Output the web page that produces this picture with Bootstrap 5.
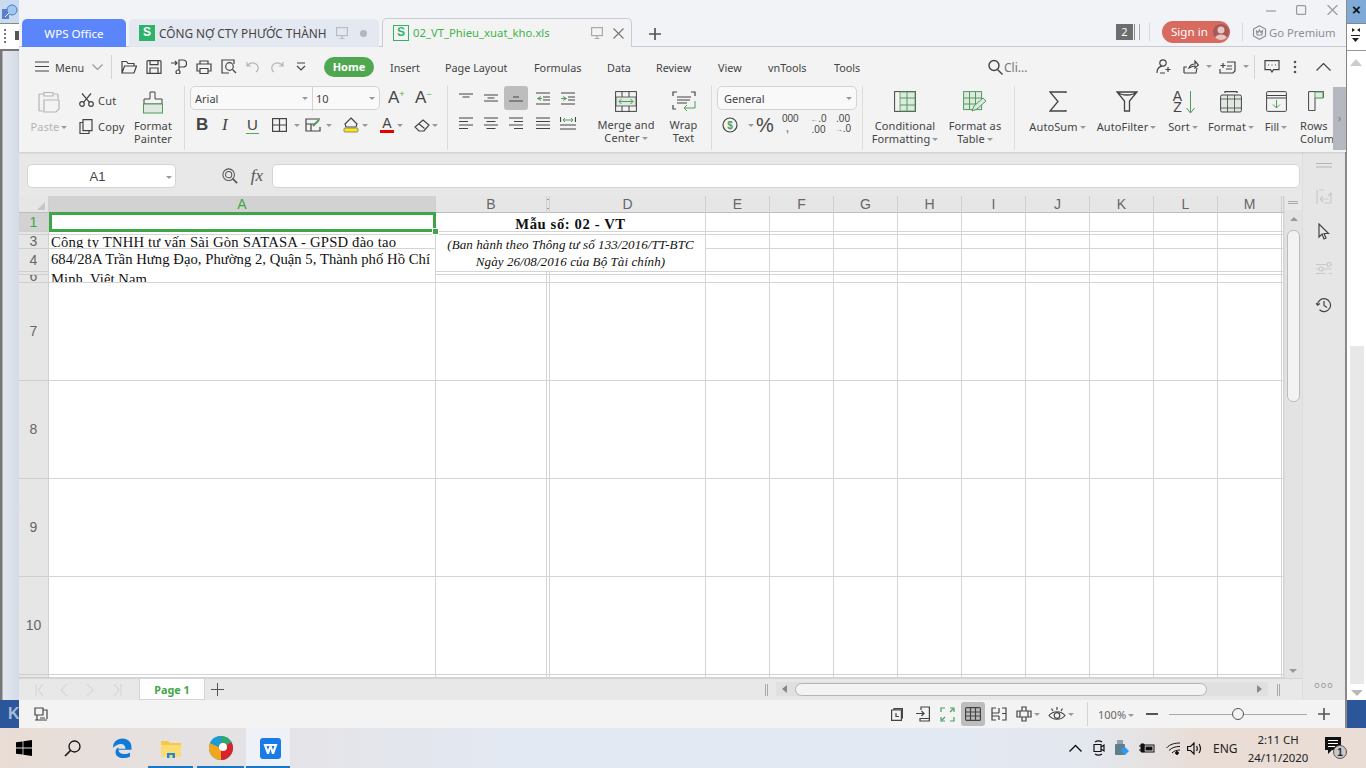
<!DOCTYPE html>
<html lang="vi">
<head>
<meta charset="utf-8">
<title>WPS Spreadsheets</title>
<link href="https://cdn.jsdelivr.net/npm/bootstrap@5.3.0/dist/css/bootstrap.min.css" rel="stylesheet">
<style>
html,body{margin:0;width:1366px;height:768px;overflow:hidden;background:#fff}
body{font-family:"Noto Sans","Liberation Sans",sans-serif;font-size:11px;color:#444;line-height:13px}
svg{display:block;flex:none}
.ln{fill:none;stroke:currentColor;stroke-width:1.2}
.fx0{flex:none}
.desk{height:728px}
.lstrip{width:19px;background:linear-gradient(90deg,#777 0,#777 2px,#e3e8ef 3px,#d4dbe6 100%)}
.ls-top{height:23px;background:#c9dcef;padding:4px 0 0 2px}
.ls-bar{height:28px;background:#fff;border-top:1px solid #888;border-bottom:2px solid #777;padding:4px 0 0 4px}
.ls-band,.rs-band{height:28px;background:#2b579a;color:#a9bcd9;font:bold 16px/28px "Liberation Sans",sans-serif;padding-left:8px;overflow:hidden}
.rstrip{width:20px;background:#fff;border-left:1px solid #8a8a8a}
.rs-top{height:23px;background:#7fa9d6;color:#111;font:bold 15px/20px "Liberation Sans",sans-serif;text-align:center}
.rs-bar{height:28px;border-top:1px solid #888;border-bottom:1px solid #999;padding:3px 0 0 4px;color:#222}
.rs-sc{width:14px;margin-left:3px}
.rs-thumb{background:#e8e8e8;height:338px}
.rs-ar{width:0;height:0;border:6px solid transparent;border-top:6px solid #b9b9b9;border-bottom:0;margin:6px 0 4px 1px}
.wps{width:1327px;background:#f2f3f7}
.ttl{height:47px;border-bottom:1px solid #c9cbd9}
.tabs{padding-left:3px;gap:3px;height:47px}
.tb{height:28px;border-radius:5px 5px 0 0;font-size:11.8px;line-height:30px;white-space:nowrap}
.tb-home{width:104px;background:#5b86fb;color:#fff;text-align:center;font-size:11.6px}
.tb-a{width:250px;background:#e4e8f1;color:#444;padding-left:10px;gap:4px}
.tb-b{width:250px;height:29px;background:#f3f3f3;border:1px solid #c9cbd9;border-bottom:0;color:#3fb34a;padding-left:10px;gap:4px;font-size:11.3px}
.sicon{flex:none;width:16px;height:16px;font:bold 12px/15px "Liberation Sans",sans-serif;text-align:center}
.sicon-f{background:#2fb36a;color:#fff}
.sicon-o{border:1px solid #2fb36a;color:#2fb36a;line-height:13px}
.mon{color:#b9bcc4;margin-left:6px}
.mon2{color:#aaa;margin-left:37px}
.xcl{color:#777;margin-left:6px}
.tdot{width:7px;height:7px;border-radius:50%;background:#b3b6bd;margin-left:8px}
.plus{margin-left:14px;color:#555;margin-bottom:7px}
.acct{width:230px;margin-left:auto}
.wctl{height:21px;padding-top:5px;color:#999}
.wc-g{display:grid;grid-template-columns:150px 30px 31px auto}
.acc-g{display:grid;grid-template-columns:17px 16px 13px 80px 10px 17px auto;align-items:center;height:22px}
.num2{background:#6d6d6d;color:#fff;font-size:11px;line-height:16px;text-align:center;height:16px}
.bars{width:6px;height:16px;margin-left:1px;border-left:1px solid #888;border-right:1px solid #aaa}
.vsep{width:1px;height:18px;background:#d7d9df}
.signin{width:68px;height:22px;background:#d96a5f;color:#fff;font-size:11.6px;line-height:22px;padding:0 0 0 9px;gap:5px;border:0;justify-content:flex-start}
.ava{width:16px;height:16px;border-radius:50%;background:#a85858;overflow:hidden}
.gop{font-size:11.3px;color:#8a8f99;white-space:nowrap}
.hexi{color:#8a8f99}
.rib{background:#f3f3f3;box-shadow:0 1px 2px rgba(0,0,0,.12);position:relative;height:105px}
.mrow{display:grid;grid-template-columns:20px 37px 19px 10px 25px 25px 25px 25px 25px 24px 26px 28px 66px 55px 89px 73px 49px 62px 50px 66px 154px 16px 152px 27px 21px 15px 22px 13px 10px 29px 23px auto;align-items:center;height:39px;padding-left:16px;white-space:nowrap;font-size:10.8px}
.mrow>span:not(.cr):not(.msep){margin-top:2px}
.msep{width:1px;height:24px;background:#d4d4d4}
.home{width:50px;height:20px;padding:0;background:#4fa850;color:#fff;font-weight:700;font-size:11px;line-height:20px;border:0}
.cr{width:0;height:0;border:3px solid transparent;border-top:3px solid #999;border-bottom:0;display:inline-block;vertical-align:2px;margin-left:2px}
.rrow{height:66px}
.grp{border-right:1px solid #dcdcdc;margin:0;height:64px;flex:none}
.g1{width:166px;display:grid;grid-template-columns:60px 54px 40px}
.g2{width:263px;padding-left:5px}
.g3{width:264px;display:grid;grid-template-columns:136px 72px 43px;padding-left:6px}
.g4{width:151px;padding-left:5px}
.g5{width:152px;display:grid;grid-template-columns:5px 74px 66px}
.g6{width:318px;display:grid;grid-template-columns:10px 65px 73px 40px 56px 34px 40px;border:0;overflow:hidden}
.lb{display:flex;flex-direction:column;align-items:center;text-align:center;white-space:nowrap;letter-spacing:.1px}
.lb-ic{height:33px;padding-top:5px;display:flex;align-items:flex-start;justify-content:center}
.lb-up{margin-top:-1px}
.lb-1{margin-top:1px}
.dim{color:#b5b5b5}
.cc{display:grid;grid-template-columns:19px auto;grid-template-rows:26px 26px;align-items:center;padding-top:1px;letter-spacing:.2px}
.fbx{height:24px;background:#f9f9f9;border:1px solid #d3d3d3;border-radius:5px;line-height:24px}
.fbx-font{width:190px;display:grid;grid-template-columns:121px auto}
.fbx-gen{width:140px;padding-left:6px}
.fcell{padding-left:4px;position:relative}
.fcell+.fcell{border-left:1px solid #d3d3d3;padding-left:3px}
.fcr{position:absolute;right:4px;top:10px}
.g2-a{display:grid;grid-template-columns:198px 27px auto;align-items:center;height:24px}
.aa{font:17px/20px "Liberation Sans",sans-serif;color:#444}
.aa sup{font-size:9px;color:#4fa850;top:-.7em}
.g2-b{display:grid;grid-template-columns:24px 26px 27px 20px 13px 19px 19px 17px 19px 16px 19px 16px auto;align-items:center;height:24px;margin-top:3px;padding-left:5px}
.b-t{font:700 17px/20px "Liberation Sans",sans-serif;color:#444;padding-left:1px}
.i-t{font:italic 17px/20px "Liberation Serif",serif;color:#444;padding-left:3px}
.u-t{font:15px/16px "Liberation Sans",sans-serif;color:#444;border-bottom:1px solid #4fa850;width:13px;text-align:center;margin-left:1px}
.algn{display:grid;grid-template-columns:25px 25px 27px 25px 25px;grid-template-rows:24px 26px;justify-items:start;align-items:center}
.ai{width:24px;height:24px;border-radius:3px;display:flex;align-items:center;justify-content:center}
.ai-on{background:#bdbdbd}
.g4-b{display:grid;grid-template-columns:24px 13px 23px 24px 25px 24px;align-items:center;height:24px;margin-top:3px;padding-left:5px}
.pct{font:20px/20px "Liberation Sans",sans-serif;color:#444;margin-left:-3px}
.tiny{font:10px/10px "Liberation Sans",sans-serif;color:#444;text-align:center;white-space:nowrap;margin-top:-2px}
.tiny-l{text-align:left}
.gn{color:#4f9c5a}
.ga{font-size:8px}
.morebar{position:absolute;right:0;top:40px;width:13px;height:63px;background:#b5b8bf;color:#777;font-size:10px;line-height:63px;text-align:center}
.mid{height:548px}
.lft{width:1283px;background:#e8e8e8}
.side{width:44px;background:#e6e6e6;border-left:1px solid #dedede;border-right:1px solid #888;padding-top:8px;color:#c9c9c9}
.sd-1{margin-top:3px;color:#b5b5b5}
.sd-2{margin-top:21px}
.sd-3{margin-top:18px;color:#444}
.sd-4{margin-top:21px}
.sd-5{margin-top:21px;color:#444}
.dots3{margin-top:353px;color:#999;font-size:9px;letter-spacing:1px;text-align:center;padding-top:12px}
.fbar{height:44px;padding:12px 2px 0 8px}
.nmb{width:149px;height:24px;background:#fff;border:1px solid #d5d5d5;border-radius:5px;text-align:center;font:13px/24px "Liberation Sans",sans-serif;position:relative;color:#444;padding-right:8px}
.nmb .cr{position:absolute;right:3px;top:11px}
.fxz{margin:4px 0 0 46px;color:#555}
.fxt{font:italic 17px/24px "Liberation Serif",serif;color:#555;margin:0 5px 0 9px;width:20px}
.fxi{flex:1;height:24px;background:#fff;border:1px solid #d5d5d5;border-radius:5px}
.work{height:482px}
.xls{width:1265px;table-layout:fixed;border-collapse:separate;border-spacing:0;margin:0;background:#fff;color:#000}
.xls th{background:#e6e6e6;font:400 14px/16px "Liberation Sans",sans-serif;color:#666;text-align:center;padding:0;border:0;border-right:1px solid #d0d0d0;border-bottom:1px solid #bdbdbd;overflow:hidden;position:relative}
.xls td{padding:0;border:0;border-right:1px solid #d4d4d4;border-bottom:1px solid #d4d4d4;background:#fff;box-shadow:none;vertical-align:top;overflow:visible}
.xls .rh{border-right:1px solid #d0d0d0;border-bottom:1px solid #cfcfcf;vertical-align:middle;line-height:14px}
.xls .rb .rh{padding-bottom:2px}
.xls th.sel{background:#d2d2d2;color:#3fa648}
.xls th.blk{background:#e6e6e6}
.corner{width:0;height:0;border-style:solid;border-width:0 0 8px 8px;border-color:transparent transparent #c6c6c6 transparent;margin:6px 0 0 18px}
.r0{height:17px}.r1{height:19px}.r2{height:3px}.r3{height:14px}.r4{height:23px}.r5{height:3px}.r6{height:8px}.rb{height:98px}.re{height:3px}
.c-h{overflow:hidden;height:13px;line-height:12px}
.c-h6{overflow:hidden;height:7px;line-height:2px}
.ctxt{font:14.67px/20px "Liberation Serif",serif;color:#111;padding-left:2px;white-space:nowrap;overflow:hidden}
.c-a3{height:13px;line-height:15px;letter-spacing:.19px}
.c-a4{height:33px;line-height:20px;letter-spacing:.04px}
.c-tit{font:700 14.67px/23px "Liberation Serif",serif;text-align:center;color:#111;height:18px;overflow:hidden;letter-spacing:.6px}
.c-it{font:italic 13px/17px "Liberation Serif",serif;text-align:center;color:#111;white-space:nowrap;padding-top:1px;letter-spacing:.08px}
.rel{position:relative}
.selbox{position:absolute;left:0;top:-1px;right:-1px;bottom:-1px;border:3px solid #3fa648;pointer-events:none}
.selh{position:absolute;right:-6px;bottom:-6px;width:5px;height:5px;background:#3fa648;border:1px solid #fff;box-sizing:content-box;z-index:2}
.cbr{position:absolute;left:-1px;top:3px;width:5px;height:10px;border:1px solid #999;background:#e6e6e6}
.vsb{width:18px;margin-left:0;background:#e8e8e8;border-left:1px solid #dcdcdc}
.vsb-top{height:14px;padding:5px 0 0 3px}
.sp2{width:10px;height:3px;border-top:1px solid #aaa;border-bottom:1px solid #aaa}
.vtrack{height:468px;background:#e3e3e3;position:relative}
.up,.dn{width:0;height:0;border:4px solid transparent}
.up{border-bottom:4px solid #999;border-top:0;margin:0 auto;position:relative;top:7px}
.dn{border-top:4px solid #999;border-bottom:0;position:absolute;left:4px;bottom:5px}
.vth{position:absolute;top:20px;left:2px;width:13px;height:172px;background:#f3f3f3;border:1px solid #bcbcbc;border-radius:6px}
.sbar{height:22px;background:#e8e8e8;border-top:1px solid #d4d4d4}
.nav-ar{width:120px;color:#d8d8d8;display:grid;grid-template-columns:25px 26px 26px auto;padding:5px 0 0 16px;box-sizing:border-box}
.pg{width:66px;height:21px;background:#fff;border:1px solid #d4d4d4;border-top:0;color:#3fa648;font-weight:700;font-size:10.8px;line-height:21px;text-align:center;margin-left:0}
.adds{margin-left:6px;color:#555;margin-top:4px}
.spl{width:3px;height:12px;border-left:1px solid #aaa;border-right:1px solid #aaa;margin:5px 0 0 541px}
.hsb{width:492px;height:14px;margin:3px 0 0 8px;background:#e0e0e0;position:relative;display:flex;align-items:center}
.la,.ra{width:0;height:0;border:4px solid transparent}
.la{border-right:5px solid #888;border-left:0;margin-left:6px}
.ra{border-left:5px solid #888;border-right:0;position:absolute;right:6px;top:3px}
.hth{width:412px;height:13px;margin-left:8px;background:#f3f3f3;border:1px solid #b5b5b5;border-radius:7px}
.spl2{width:3px;height:12px;border-left:1px solid #aaa;border-right:1px solid #aaa;margin:5px 0 0 9px}
.stat{height:28px;background:#f3f3f3;display:grid;grid-template-columns:857px 25px 24px 25px 26px 25px 32px 39px 11px 48px 23px 149px auto;align-items:center;padding-left:15px;border-right:1px solid #888}
.act{width:24px;height:24px;background:#bdbdbd;border-radius:3px;display:flex;align-items:center;justify-content:center;margin-left:-4px}
.zp{color:#666;white-space:nowrap;font-size:11px}
.slider{width:138px;height:1px;background:#aaa;position:relative}
.knob{position:absolute;left:63px;top:-6px;width:12px;height:12px;border-radius:50%;background:#f3f3f3;border:1px solid #555}
.bar{height:40px;background:linear-gradient(90deg,#e9ddd5 0,#e5e1e2 14%,#e3e9f3 38%,#e3e9f3 68%,#e3e7ee 80%,#e9ddd5 88%,#e9ddd5 100%);display:grid;grid-template-columns:48px 49px 49px 49px 51px 44px 779px 24px 22px 24px 27px 21px 26px 19px 93px auto;align-items:center;position:relative}
.tk{height:40px;display:flex;align-items:center;justify-content:center;position:relative}
.tk-run::after{content:"";position:absolute;left:2px;right:2px;bottom:0;height:2px;background:#1a78c8}
.tk-on{background:#eef2f8;width:44px;padding-left:4px}
.tk-on::after{left:0;right:0}
.clock{font:11.4px/18px "Noto Sans",sans-serif;color:#222;text-align:center;white-space:nowrap;width:76px;margin:1px 0 0 8px}
.eng{font-size:12px;color:#222;white-space:nowrap}
.dk{color:#111}
</style>
</head>
<body>
<div class="d-flex flex-column">
<div class="desk d-flex">

  <div class="lstrip d-flex flex-column fx0">
    <div class="ls-top"><svg width="17" height="16" viewBox="0 0 17 16"><rect x="0" y="5" width="7" height="10" fill="#5a7fd0"/><circle cx="10" cy="6" r="5" fill="#9fc9ef" stroke="#4e78c4"/><path d="M3 13l4-4" stroke="#fff"/></svg></div>
    <div class="ls-bar d-flex gap-2"><svg width="3" height="18" viewBox="0 0 3 18"><path d="M1 1v16" stroke="#777" stroke-width="2" stroke-dasharray="2 2"/></svg><svg width="8" height="16" viewBox="0 0 8 16"><rect y="3" width="8" height="9" fill="#555"/></svg></div>
    <div class="flex-grow-1"></div>
    <div class="ls-band">K</div>
  </div>

  <div class="wps d-flex flex-column">
    <div class="ttl d-flex">
      <div class="tabs d-flex align-items-end">
        <div class="tb tb-home">WPS Office</div>
        <div class="tb tb-a d-flex align-items-center"><span class="sicon sicon-f">S</span><span>CÔNG NỢ CTY PHƯỚC THÀNH</span>
          <svg class="mon ln" width="12" height="12" viewBox="0 0 12 12"><rect x=".6" y=".6" width="10.8" height="8"/><path d="M6 9v2.5M3.5 11.5h5"/></svg><span class="tdot"></span></div>
        <div class="tb tb-b d-flex align-items-center"><span class="sicon sicon-o">S</span><span>02_VT_Phieu_xuat_kho.xls</span>
          <svg class="ln mon2" width="12" height="12" viewBox="0 0 12 12"><rect x=".6" y=".6" width="10.8" height="8"/><path d="M6 9v2.5M3.5 11.5h5"/></svg>
          <svg class="ln xcl" width="11" height="11" viewBox="0 0 11 11"><path d="M.5.5l10 10M10.500.5l-10 10"/></svg></div>
        <svg class="plus" width="12" height="12" viewBox="0 0 12 12"><path d="M6 0v12M0 6h12" stroke="currentColor" stroke-width="1.7"/></svg>
      </div>
      <div class="acct">
        <div class="wctl wc-g">
          <span></span>
          <svg class="ln" width="11" height="10" viewBox="0 0 11 10"><path d="M0 6h10"/></svg>
          <svg class="ln" width="11" height="10" viewBox="0 0 11 10"><rect x=".6" y=".6" width="9" height="8.800" rx="1"/></svg>
          <svg class="ln" width="11" height="10" viewBox="0 0 11 10"><path d="M.5 0l10 10M10.500 0l-10 10"/></svg>
        </div>
        <div class="acc-g">
          <div class="num2">2</div><div class="bars"></div>
          <div class="vsep"></div>
          <button class="btn rounded-pill signin d-flex align-items-center" type="button">Sign in<span class="ava"><svg width="16" height="16" viewBox="0 0 16 16"><circle cx="8" cy="6" r="3.500" fill="#e7c5c2"/><ellipse cx="8" cy="14.500" rx="6" ry="4" fill="#e7c5c2"/></svg></span></button>
          <div class="vsep"></div>
          <svg class="hexi ln" width="15" height="15" viewBox="0 0 15 15"><path d="M7.500 .7l6 3.400v6.800l-6 3.400-6-3.400V4.100z"/><path d="M4.500 6l1.700 1.300L7.500 5l1.300 2.300L10.500 6l-.6 4H5.100z"/></svg>
          <span class="gop">Go Premium</span>
        </div>
      </div>
    </div>

    <div class="rib">
      <div class="mrow">
        <svg class="ln" width="14" height="11" viewBox="0 0 14 11"><path d="M0 1h14M0 5.500h14M0 10h14"/></svg>
        <span>Menu</span>
        <svg class="ln" width="11" height="6" viewBox="0 0 11 6" style="color:#999"><path d="M.5.5l5 5 5-5"/></svg>
        <span class="msep"></span>
        <svg class="ln" width="16" height="14" viewBox="0 0 16 14"><path d="M1 13V1.500h4.500l1.500 2h6V6M1 13l2.500-7h12L13 13z"/></svg>
        <svg class="ln" width="16" height="14" viewBox="0 0 16 14"><path d="M2 .6h12a1 1 0 0 1 1 1v11.800H1V1.600a1 1 0 0 1 1-1zM4 .6v4h8v-4M4 13.400V8h8v5.400"/></svg>
        <svg class="ln" width="16" height="15" viewBox="0 0 16 15"><path d="M0 4h6M4 2l2 2-2 2M8 1h4a3 3 0 0 1 0 7H8zM8 8v3M5 13a2 2 0 1 0 4 0 2 2 0 1 0-4 0"/></svg>
        <svg class="ln" width="16" height="14" viewBox="0 0 16 14"><path d="M4 4V1h8v3M4 11H1V4h14v7h-3M4 8.500h8v5H4z"/></svg>
        <svg class="ln" width="16" height="15" viewBox="0 0 16 15"><path d="M13 5V1H1v13h7"/><circle cx="8.500" cy="7.500" r="3.800"/><path d="M11.500 10.500l3.500 3.500"/></svg>
        <svg class="ln dim" width="14" height="12" viewBox="0 0 14 12"><path d="M1 1v4h4M1 5c2-3 6-4 9-2 3 2 3 6 0 8"/></svg>
        <svg class="ln dim" width="14" height="12" viewBox="0 0 14 12"><path d="M13 1v4H9M13 5c-2-3-6-4-9-2-3 2-3 6 0 8"/></svg>
        <svg class="ln" width="10" height="10" viewBox="0 0 10 10"><path d="M1 1h8M1 4l4 4 4-4"/></svg>
        <button class="btn rounded-pill home" type="button">Home</button>
        <span>Insert</span><span>Page Layout</span><span>Formulas</span><span>Data</span><span>Review</span><span>View</span><span>vnTools</span><span>Tools</span>
        <svg class="ln" width="15" height="16" viewBox="0 0 15 16" style="stroke-width:1.4"><circle cx="6" cy="6.500" r="5"/><path d="M9.500 10.500L14.500 15.500"/></svg>
        <span style="color:#777;font-size:12px">Cli...</span>
        <svg class="ln" width="16" height="15" viewBox="0 0 16 15"><circle cx="7" cy="4" r="3.200"/><path d="M1 14c0-5 3-6.500 5-6.800M4 14h5M12 8v5M9.500 10.500h5"/></svg>
        <svg class="ln" width="16" height="14" viewBox="0 0 16 14"><path d="M1 13V7h3M1 13h12l1-5M6 8c1-3 3-4 6-4V1l3.500 4L12 8V6c-2 0-4 1-6 2z"/></svg>
        <span class="cr"></span>
        <svg class="ln" width="17" height="14" viewBox="0 0 17 14"><path d="M4 3v5M1.500 5.500h5M8 2h8v9l-2 2H1V9M8 6h5M7 9h6"/></svg>
        <span class="cr"></span>
        <span class="msep"></span>
        <svg class="ln" width="16" height="13" viewBox="0 0 16 13"><path d="M1 .6h14v9H9.500L8 12 6.500 9.600H1z"/><path d="M4 5h1M7.500 5h1M11 5h1"/></svg>
        <svg width="4" height="14" viewBox="0 0 4 14"><circle cx="2" cy="2" r="1.300" fill="#555"/><circle cx="2" cy="7" r="1.300" fill="#555"/><circle cx="2" cy="12" r="1.300" fill="#555"/></svg>
        <svg class="ln" width="15" height="8" viewBox="0 0 15 8"><path d="M.5 7.500l7-7 7 7"/></svg>
      </div>

      <div class="rrow d-flex">
        <div class="grp g1">
          <div class="lb dim"><div class="lb-ic"><svg class="ln" width="22" height="24" viewBox="0 0 22 24"><path d="M6 3H2a1 1 0 0 0-1 1v15a1 1 0 0 0 1 1h3M16 3h3a1 1 0 0 1 1 1v4M6 1.500h9V5H6zM6 9h15v9l-3 3H6z"/></svg></div><span class="lb-1">Paste<span class="cr"></span></span></div>
          <div class="cc">
            <svg class="ln" width="15" height="14" viewBox="0 0 15 14"><circle cx="3" cy="11" r="2.300"/><circle cx="12" cy="11" r="2.300"/><path d="M4.500 9.300L12 .5M10.500 9.300L3 .5"/></svg><span>Cut</span>
            <svg class="ln" width="14" height="15" viewBox="0 0 14 15"><path d="M4 .6h9v11H4zM4 3.500H1v11h9v-3"/></svg><span>Copy</span>
          </div>
          <div class="lb"><div class="lb-ic"><svg width="20" height="24" viewBox="0 0 20 24"><path d="M7 1h5v7h7v5H1V8h6z" fill="none" stroke="#444"/><rect x=".5" y="13" width="19" height="9" fill="#dfe9e2" stroke="#4f9c5a"/></svg></div><span>Format<br>Painter</span></div>
        </div>

        <div class="grp g2">
          <div class="g2-a">
            <div class="fbx fbx-font"><div class="fcell">Arial<span class="cr fcr"></span></div><div class="fcell">10<span class="cr fcr"></span></div></div>
            <span class="aa">A<sup>+</sup></span><span class="aa">A<sup>−</sup></span>
          </div>
          <div class="g2-b">
            <span class="b-t">B</span><span class="i-t">I</span><span class="u-t">U</span>
            <svg class="ln" width="15" height="14" viewBox="0 0 15 14"><rect x=".6" y=".6" width="13.800" height="12.800"/><path d="M7.500 0v14M0 7h15"/></svg><span class="cr"></span>
            <svg class="ln" width="16" height="14" viewBox="0 0 16 14"><path d="M15 1H1v12h14V9M1 6h9M6 6v7"/><path d="M8 8l6-6" stroke="#4f9c5a" stroke-width="2"/></svg><span class="cr"></span>
            <svg width="16" height="16" viewBox="0 0 16 16"><path class="ln" d="M8 1l6 6-1 3H3L2 7z"/><rect x="1" y="11" width="14" height="4" rx="1" fill="#ffe900" stroke="#888"/></svg><span class="cr"></span>
            <span class="d-flex flex-column align-items-center"><span style="font:14px/13px 'Liberation Sans',sans-serif">A</span><svg width="14" height="3" viewBox="0 0 14 3"><rect width="14" height="3" fill="#e60000"/></svg></span><span class="cr"></span>
            <svg class="ln" width="16" height="13" viewBox="0 0 16 13"><path d="M9 1l6 5-5 6H5L1 8zM4.500 4.500l6 5"/></svg><span class="cr"></span>
          </div>
        </div>

        <div class="grp g3">
          <div class="algn">
            <div class="ai"><svg class="ln" width="14" height="10" viewBox="0 0 14 10"><path d="M0 1h14M3.500 4h7"/></svg></div>
            <div class="ai"><svg class="ln" width="14" height="8" viewBox="0 0 14 8"><path d="M0 1h14M3.500 4h7M0 7h14"/></svg></div>
            <div class="ai ai-on"><svg class="ln" width="14" height="8" viewBox="0 0 14 8"><path d="M4 3h6M0 7h14"/></svg></div>
            <div class="ai"><svg width="14" height="13" viewBox="0 0 14 13"><path class="ln" d="M0 1h14M7 5h7M7 8h7M0 12h14"/><path d="M5 4.500L1.500 6.500 5 8.500M1.500 6.500H6" fill="none" stroke="#4f9c5a"/></svg></div>
            <div class="ai"><svg width="14" height="13" viewBox="0 0 14 13"><path class="ln" d="M0 1h14M7 5h7M7 8h7M0 12h14"/><path d="M2 4.500L5.500 6.500 2 8.500M5.500 6.500H0" fill="none" stroke="#4f9c5a"/></svg></div>
            <div class="ai"><svg class="ln" width="14" height="12" viewBox="0 0 14 12"><path d="M0 1h14M0 4.500h9M0 8h14M0 11.500h9"/></svg></div>
            <div class="ai"><svg class="ln" width="14" height="12" viewBox="0 0 14 12"><path d="M0 1h14M2.500 4.500h9M0 8h14M2.500 11.500h9"/></svg></div>
            <div class="ai"><svg class="ln" width="14" height="12" viewBox="0 0 14 12"><path d="M0 1h14M5 4.500h9M0 8h14M5 11.500h9"/></svg></div>
            <div class="ai"><svg class="ln" width="14" height="12" viewBox="0 0 14 12"><path d="M0 1h14M0 4.500h14M0 8h14M0 11.500h14"/></svg></div>
            <div class="ai"><svg width="16" height="13" viewBox="0 0 16 13"><path class="ln" d="M0 8h16M0 12h16M.5 0v5M15.500 0v5"/><path d="M3 3h10M5 1L3 3l2 2M11 1l2 2-2 2" fill="none" stroke="#4f9c5a"/></svg></div>
          </div>
          <div class="lb"><div class="lb-ic"><svg width="22" height="21" viewBox="0 0 22 21"><rect x=".6" y=".6" width="20.800" height="19.800" fill="none" stroke="#444"/><rect x="1" y="6" width="20" height="9" fill="#dfe9e2" stroke="#444" stroke-width=".8"/><path d="M7 0v6M14 0v6M7 15v6M14 15v6" stroke="#444" fill="none"/><path d="M4 10.500h14M6.500 8L4 10.500 6.500 13M15.500 8L18 10.500 15.500 13" fill="none" stroke="#4f9c5a"/></svg></div><span class="lb-up">Merge and<br>Center<span class="cr"></span></span></div>
          <div class="lb"><div class="lb-ic"><svg width="24" height="21" viewBox="0 0 24 21"><path class="ln" d="M1 5V1h4M19 1h4v4M1 14v4h3M5 6h14M5 9h13M5 12h10"/><path d="M23 10v7h-11M15 14l-3 3 3 3" fill="none" stroke="#4f9c5a"/></svg></div><span class="lb-up">Wrap<br>Text</span></div>
        </div>

        <div class="grp g4">
          <div class="fbx fbx-gen position-relative">General<span class="cr fcr"></span></div>
          <div class="g4-b">
            <svg width="16" height="16" viewBox="0 0 16 16"><circle class="ln" cx="8" cy="8" r="7"/><text x="8" y="11.500" text-anchor="middle" font-family="Liberation Sans" font-size="10" font-weight="700" fill="#4f9c5a">$</text></svg><span class="cr"></span>
            <span class="pct">%</span>
            <div class="tiny tiny-l"><div>000</div><div class="gn ps-1" style="font-weight:700">,</div></div>
            <div class="tiny"><div><span class="gn ga">←</span>.0</div><div>.00</div></div>
            <div class="tiny"><div>.00</div><div><span class="gn ga">→</span>.0</div></div>
          </div>
        </div>

        <div class="grp g5">
          <span></span>
          <div class="lb"><div class="lb-ic"><svg width="22" height="21" viewBox="0 0 22 21"><rect x=".6" y=".6" width="20.800" height="19.800" fill="none" stroke="#444"/><rect x="6" y="1" width="15" height="19" fill="#dfe9e2" stroke="#4f9c5a" stroke-width=".8"/><path d="M6 7h15M6 14h15M13 1v19" stroke="#4f9c5a" fill="none"/></svg></div><span>Conditional<br>Formatting<span class="cr"></span></span></div>
          <div class="lb"><div class="lb-ic"><svg width="24" height="22" viewBox="0 0 24 22"><rect x=".6" y=".6" width="18" height="18" fill="#dfe9e2" stroke="#4f9c5a"/><path d="M6.500 1v18M12.500 1v18M1 7h18M1 13h18" stroke="#4f9c5a" fill="none"/><path d="M9 20l2-5 9-8 3 3-9 8z" fill="#dfe9e2" stroke="#4f9c5a"/></svg></div><span>Format as<br>Table<span class="cr"></span></span></div>
        </div>

        <div class="grp g6">
          <span></span>
          <div class="lb"><div class="lb-ic"><svg class="ln" width="18" height="21" viewBox="0 0 18 21" style="stroke-width:1.300"><path d="M17 2V1H1l8 9.500L1 20h16v-1"/></svg></div><span class="lb-1">AutoSum<span class="cr"></span></span></div>
          <div class="lb"><div class="lb-ic"><svg class="ln" width="22" height="21" viewBox="0 0 22 21" style="stroke-width:1.300"><path d="M1 1h20l-7.500 9v10h-5V10zM1 1c5 4 15 4 20 0"/></svg></div><span class="lb-1">AutoFilter<span class="cr"></span></span></div>
          <div class="lb"><div class="lb-ic"><span class="d-flex"><span style="font:14px/11px 'Liberation Sans',sans-serif;text-align:center;width:13px">A<br>Z</span><svg width="9" height="23" viewBox="0 0 9 23" style="margin-left:2px"><path d="M4.500 0v22M.5 17l4 5 4-5" fill="none" stroke="#4f9c5a"/></svg></span></div><span class="lb-1">Sort<span class="cr"></span></span></div>
          <div class="lb"><div class="lb-ic"><svg width="22" height="22" viewBox="0 0 22 22"><path class="ln" d="M5 .6h12M5 0v2M17 0v2"/><rect x=".6" y="4" width="20.800" height="17" rx="1.500" fill="#dfe9e2" stroke="#444"/><path d="M1 8h20M1 17h20M7.500 4v17M14.500 4v17" stroke="#444" fill="none" stroke-width=".8"/></svg></div><span class="lb-1">Format<span class="cr"></span></span></div>
          <div class="lb"><div class="lb-ic"><svg width="21" height="21" viewBox="0 0 21 21"><rect x=".6" y=".6" width="19.800" height="19.800" rx="1" fill="none" stroke="#444"/><path class="ln" d="M1 4.500h19M1 7h19"/><path d="M10.500 9v8M7 13.500l3.500 3.500 3.500-3.500" fill="none" stroke="#4f9c5a"/></svg></div><span class="lb-1">Fill<span class="cr"></span></span></div>
          <div class="lb align-items-start" style="padding-left:7px"><div class="lb-ic" style="padding-left:8px"><svg width="16" height="20" viewBox="0 0 16 20"><path d="M.6.6h15v6H7v13H.6z" fill="none" stroke="#444"/><path d="M7 1v6h8V1z" fill="#dfe9e2" stroke="#4f9c5a"/></svg></div><span style="text-align:left">Rows<br>Columns</span></div>
        </div>
      </div>
      <div class="morebar">›</div>
    </div>

    <div class="mid d-flex">
      <div class="lft d-flex flex-column">
        <div class="fbar d-flex">
          <div class="nmb">A1<span class="cr"></span></div>
          <svg class="fxz ln" width="16" height="16" viewBox="0 0 18 18"><circle cx="7.500" cy="7.500" r="6.500"/><circle cx="7.500" cy="7.500" r="3.500"/><path d="M12 12l5 5" stroke-width="1.800"/></svg>
          <div class="fxt text-center">fx</div>
          <div class="fxi"></div>
        </div>
        <div class="work d-flex">
          <table class="table xls">
            <colgroup><col style="width:30px"><col style="width:387px"><col style="width:111px"><col style="width:3px"><col style="width:156px"><col style="width:64px"><col style="width:64px"><col style="width:64px"><col style="width:64px"><col style="width:64px"><col style="width:64px"><col style="width:64px"><col style="width:64px"><col style="width:64px"><col style="width:2px"></colgroup>
            <tbody>
            <tr class="r0"><th class="blk"><div class="corner"></div></th><th class="sel">A</th><th>B</th><th><span class="cbr"></span></th><th>D</th><th>E</th><th>F</th><th>G</th><th>H</th><th>I</th><th>J</th><th>K</th><th>L</th><th>M</th><th class="blk"></th></tr>
            <tr class="r1"><th class="sel rh">1</th><td class="rel"><div class="selbox"><span class="selh"></span></div></td><td colspan="3"><div class="c-tit">Mẫu số: 02 - VT</div></td><td></td><td></td><td></td><td></td><td></td><td></td><td></td><td></td><td></td><td></td></tr>
            <tr class="r2"><th class="rh"></th><td></td><td colspan="3"></td><td></td><td></td><td></td><td></td><td></td><td></td><td></td><td></td><td></td><td></td></tr>
            <tr class="r3"><th class="rh"><div class="c-h">3</div></th><td><div class="ctxt c-a3">Công ty TNHH tư vấn Sài Gòn SATASA - GPSD đào tạo</div></td><td colspan="3" rowspan="2"><div class="c-it">(Ban hành theo Thông tư số 133/2016/TT-BTC<br>Ngày 26/08/2016 của Bộ Tài chính)</div></td><td></td><td></td><td></td><td></td><td></td><td></td><td></td><td></td><td></td><td></td></tr>
            <tr class="r4"><th class="rh"><div class="c-h">4</div></th><td rowspan="3"><div class="ctxt c-a4">684/28A Trần Hưng Đạo, Phường 2, Quận 5, Thành phố Hồ Chí<br>Minh, Việt Nam</div></td><td></td><td></td><td></td><td></td><td></td><td></td><td></td><td></td><td></td><td></td></tr>
            <tr class="r5"><th class="rh"></th><td></td><td></td><td></td><td></td><td></td><td></td><td></td><td></td><td></td><td></td><td></td><td></td><td></td></tr>
            <tr class="r6"><th class="rh"><div class="c-h6">6</div></th><td></td><td></td><td></td><td></td><td></td><td></td><td></td><td></td><td></td><td></td><td></td><td></td><td></td></tr>
            <tr class="rb"><th class="rh">7</th><td></td><td></td><td></td><td></td><td></td><td></td><td></td><td></td><td></td><td></td><td></td><td></td><td></td><td></td></tr>
            <tr class="rb"><th class="rh">8</th><td></td><td></td><td></td><td></td><td></td><td></td><td></td><td></td><td></td><td></td><td></td><td></td><td></td><td></td></tr>
            <tr class="rb"><th class="rh">9</th><td></td><td></td><td></td><td></td><td></td><td></td><td></td><td></td><td></td><td></td><td></td><td></td><td></td><td></td></tr>
            <tr class="rb"><th class="rh">10</th><td></td><td></td><td></td><td></td><td></td><td></td><td></td><td></td><td></td><td></td><td></td><td></td><td></td><td></td></tr>
            <tr class="re"><th class="rh"></th><td></td><td></td><td></td><td></td><td></td><td></td><td></td><td></td><td></td><td></td><td></td><td></td><td></td><td></td></tr>
            </tbody>
          </table>
          <div class="vsb">
            <div class="vsb-top"><div class="sp2"></div></div>
            <div class="vtrack"><div class="up"></div><div class="vth"></div><div class="dn"></div></div>
          </div>
        </div>
        <div class="sbar d-flex">
          <div class="nav-ar">
            <svg class="ln" width="10" height="12" viewBox="0 0 10 12"><path d="M1 0v12M8 0L3 6l5 6"/></svg>
            <svg class="ln" width="8" height="12" viewBox="0 0 8 12"><path d="M7 0L1 6l6 6"/></svg>
            <svg class="ln" width="8" height="12" viewBox="0 0 8 12"><path d="M1 0l6 6-6 6"/></svg>
            <svg class="ln" width="10" height="12" viewBox="0 0 10 12"><path d="M9 0v12M2 0l5 6-5 6"/></svg>
          </div>
          <div class="pg">Page 1</div>
          <svg class="adds" width="13" height="13" viewBox="0 0 13 13"><path d="M6.500 0v13M0 6.500h13" stroke="currentColor"/></svg>
          <div class="spl"></div>
          <div class="hsb"><span class="la"></span><div class="hth"></div><span class="ra"></span></div>
          <div class="spl2"></div>
        </div>
      </div>
      <div class="side d-flex flex-column align-items-center">
        <svg class="ln sd-1" width="16" height="5" viewBox="0 0 16 5"><path d="M0 .5h16M0 4h16"/></svg>
        <svg class="ln sd-2" width="16" height="16" viewBox="0 0 16 16"><path d="M1 1v14M3 1h5M8 14h6a1 1 0 0 0 1-1V5M12 7l3-3 3 3M7 13l-3-3M4 10l3-3M4 10h9"/></svg>
        <svg class="ln sd-3" width="12" height="18" viewBox="0 0 12 18"><path d="M1 1v13l3-3 2 5 2-1-2-4.500h4.500z"/></svg>
        <svg class="ln sd-4" width="16" height="14" viewBox="0 0 16 14"><path d="M0 2.500h11M15 2.500h1M0 7h3M7 7h9M0 11.500h9M13 11.500h3"/><circle cx="13" cy="2.500" r="2"/><circle cx="5" cy="7" r="2"/></svg>
        <svg class="ln sd-5" width="16" height="16" viewBox="0 0 16 16"><path d="M1.500 8a6.500 6.500 0 1 1 2 4.800M0 6l1.500 2.200L4 6.500M8 4v4.500l3 2"/></svg>
        <div class="dots3">ooo</div>
      </div>
    </div>

    <div class="stat">
      <svg class="ln" width="16" height="15" viewBox="0 0 16 15"><path d="M1 1h8v7H1zM9 3h4v2M13 3v9M1 13h12M3 8v5M6 11h5"/></svg>
      <svg class="ln" width="12" height="13" viewBox="0 0 12 13"><path d="M3 2V.6h8.400V10H10M.6 2h9.800v10.400H.6zM5 5v3.500h3"/></svg>
      <svg class="ln" width="14" height="16" viewBox="0 0 14 16"><path d="M5 4V1h8.400v14H4v-3M4 12.500h9M0 7.500h8M5.500 5l2.500 2.500L5.500 10"/></svg>
      <svg width="15" height="15" viewBox="0 0 15 15" fill="none" stroke="#4f9c5a" stroke-width="1.200"><path d="M1 5V1h4M14 5V1h-4M1 10v4h4M14 10v4h-4M10 5l3-3M5 10l-3 3"/></svg>
      <div class="act"><svg class="ln" width="16" height="14" viewBox="0 0 16 14"><rect x=".6" y=".6" width="14.800" height="12.800" rx="1"/><path d="M5.500 1v12M10.500 1v12M1 5h14M1 9h14"/></svg></div>
      <svg class="ln" width="16" height="14" viewBox="0 0 16 14"><path d="M5 1H1v12h4M8 1v5M8 9v4M11 1h4v12h-4M1 6h7M1 9h7M11 6.500h4"/></svg>
      <span class="d-flex align-items-center"><svg class="ln" width="16" height="16" viewBox="0 0 16 16"><path d="M4 5h8v6H4zM1 5h3v6H1zM12 5h3v6h-3zM6 5V1h4v4M6 11v4h4v-4"/></svg><span class="cr"></span></span>
      <span class="d-flex align-items-center"><svg class="ln" width="18" height="16" viewBox="0 0 18 16"><path d="M1 9.500c4-5 12-5 16 0-4 5-12 5-16 0z"/><circle cx="9" cy="9.500" r="2.800"/><path d="M9 1v3M3.500 2.500L5 5M14.500 2.500L13 5"/></svg><span class="cr"></span></span>
      <span class="msep"></span>
      <span class="zp">100%<span class="cr"></span></span>
      <svg width="12" height="2" viewBox="0 0 12 2"><rect width="12" height="2" fill="#555"/></svg>
      <div class="slider"><div class="knob"></div></div>
      <svg width="12" height="12" viewBox="0 0 12 12"><path d="M6 0v12M0 6h12" stroke="#555" stroke-width="1.600"/></svg>
    </div>
  </div>

  <div class="rstrip d-flex flex-column fx0">
    <div class="rs-top">×</div>
    <div class="rs-bar"><svg width="10" height="16" viewBox="0 0 10 16" fill="#222"><path d="M1 1l3 2-3 2zM9 1L6 3l3 2zM0 8h9v1H0zM1 11h7L4.500 15z"/></svg></div>
    <div class="rs-sc flex-grow-1 d-flex flex-column">
      <svg class="mt-2" width="12" height="7" viewBox="0 0 12 7"><path d="M6 0l6 7H0z" fill="#ccc"/></svg>
      <div class="flex-grow-1"></div>
      <div class="rs-thumb"></div>
      <div class="rs-ar"></div>
    </div>
    <div class="rs-band">&nbsp;</div>
  </div>
</div>

<div class="bar">
  <div class="tk"><svg width="16" height="16" viewBox="0 0 16 16" fill="#000"><path d="M0 2.300l6.600-.9v6.200H0zM7.400 1.300L16 0v7.600H7.400zM0 8.400h6.600v6.200L0 13.700zM7.400 8.400H16V16l-8.600-1.200z"/></svg></div>
  <div class="tk"><svg width="17" height="17" viewBox="0 0 17 17" fill="none" stroke="#111" stroke-width="1.300"><circle cx="10.500" cy="6.500" r="5.500"/><path d="M6.500 10.500L1 16" stroke-width="1.600"/></svg></div>
  <div class="tk"><svg width="20" height="20" viewBox="0 0 20 20"><path d="M1 10C1 4 5 .5 10.500.5c5.500 0 9 3.700 9 9v2.300H6.500c.3 3 2.800 4.300 5.500 4.300 2.500 0 4.500-.7 6-1.700v4c-1.800 1-4 1.600-6.800 1.600C7 20 3.500 18 3.500 14c0-2.500 1.500-4.300 4.500-5.500-1.500.5-2 1.700-1.800 2.200h7.300c0-3-2-4.700-4.500-4.700-3 0-6 2-8.500 4z" fill="#0f7bd6"/></svg></div>
  <div class="tk tk-run"><svg width="20" height="19" viewBox="0 0 20 19"><path d="M0 2h7l2 2h11v14H0z" fill="#f6c844"/><path d="M0 6h20v12H0z" fill="#fbdc74"/><path d="M6 14h8v5H6z" fill="#1e88d6"/><path d="M8.500 16h3v3h-3z" fill="#fbdc74"/></svg></div>
  <div class="tk tk-run"><svg width="24" height="24" viewBox="0 0 24 24"><circle cx="12" cy="12" r="12" fill="#1c9bd6"/><path d="M12 0a12 12 0 0 1 10.500 6.200L12 12z" fill="#2fa86a"/><path d="M22.500 6.200A12 12 0 0 1 12 24l0-12z" fill="#d8232a"/><path d="M12 24A12 12 0 0 1 1 7l11 5z" fill="#f0a71e"/><path d="M1 7A12 12 0 0 1 12 0v12z" fill="#1c9bd6"/><circle cx="14" cy="11" r="4" fill="#fff"/></svg></div>
  <div class="tk tk-run tk-on"><svg width="21" height="21" viewBox="0 0 21 21"><rect width="21" height="21" rx="3" fill="#1a7ae8"/><path d="M3.500 6h14l-3.500 10h-2l-1.500-5-1.500 5h-2zM6.500 8l1.500 4 1.500-4zM11.500 8l1.500 4 1.500-4z" fill="#fff" fill-rule="evenodd"/></svg></div>
  <span></span>
  <svg class="ln dk" width="13" height="8" viewBox="0 0 13 8" style="stroke-width:1.400"><path d="M.5 7.500l6-6 6 6"/></svg>
  <svg class="ln dk" width="12" height="16" viewBox="0 0 12 16"><path d="M2 2c2-1.300 5-1.300 7 0M2 14c2 1.300 5 1.300 7 0M1 4.500h7v7H1zM8 7l3-2v6l-3-2"/></svg>
  <svg width="15" height="16" viewBox="0 0 15 16"><rect x="2" y="0" width="6" height="4" fill="#90a4ae"/><rect x="0" y="4" width="10" height="11" rx="1" fill="#607d8b"/><path d="M9 6l5 5-4 4-4-4z" fill="#2b9af3"/></svg>
  <svg width="16" height="12" viewBox="0 0 16 12"><rect x="5" y="3" width="10" height="7" fill="none" stroke="#111"/><rect x="6.500" y="4.500" width="7" height="4" fill="#111"/><path d="M0 4h2M0 8h2M2 2h3v8H2z" stroke="#111" fill="#111"/></svg>
  <svg width="15" height="13" viewBox="0 0 15 13" fill="none" stroke="#111"><path d="M.5 6C4 2 9 1 14 1M3 8.500C6 5.500 9.500 4.500 14 4.500M6 11c2-2 4.500-3 8-3"/><circle cx="11" cy="11" r="1.400" fill="#111"/></svg>
  <svg class="ln dk" width="15" height="13" viewBox="0 0 15 13"><path d="M.6 4.500h3L7 1v11L3.600 8.500h-3zM9.500 4c1 1.500 1 3.500 0 5M12 2c2 3 2 6 0 9"/></svg>
  <span class="eng">ENG</span>
  <div class="clock">2:11 CH<br>24/11/2020</div>
  <svg width="26" height="22" viewBox="0 0 26 22"><path d="M0 0h16v13h-9l-4 4v-4H0z" fill="#111"/><path d="M3 3.500h10M3 6.500h10M3 9.500h7" stroke="#fff"/><circle cx="15" cy="15" r="6.500" fill="#c8c8c8" stroke="#555"/><text x="15" y="18.500" text-anchor="middle" font-family="Liberation Sans" font-size="10" font-weight="700" fill="#222">1</text></svg>
</div>
</div>
</body>
</html>
